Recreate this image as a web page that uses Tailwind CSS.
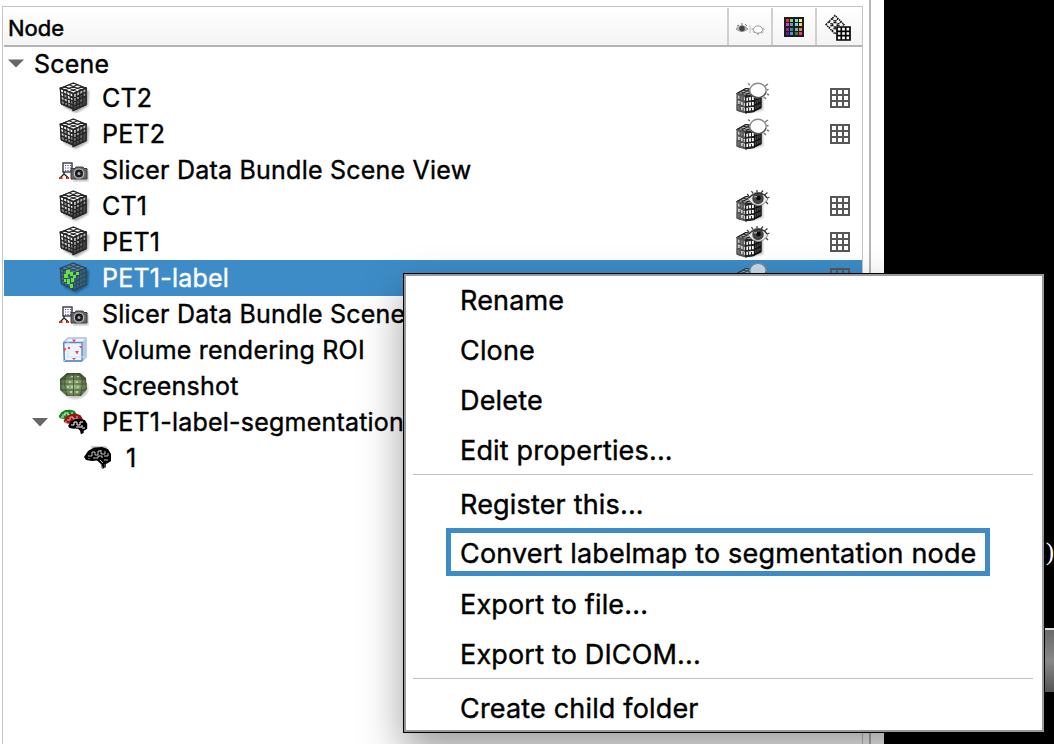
<!DOCTYPE html>
<html lang="en">
<head>
<meta charset="utf-8">
<title>Data tree</title>
<script src="https://cdn.jsdelivr.net/npm/@tailwindcss/browser@4"></script>
</head>
<body class="bg-white">
<svg width="0" height="0" class="absolute">
  <defs>
    <linearGradient id="faceL" x1="0" y1="0" x2="0" y2="1"><stop offset="0" stop-color="#fff"/><stop offset=".55" stop-color="#ddd"/><stop offset="1" stop-color="#555"/></linearGradient>
    <linearGradient id="faceR" x1="0" y1="0" x2="0" y2="1"><stop offset="0" stop-color="#c8c8c8"/><stop offset="1" stop-color="#3c3c3c"/></linearGradient>
    <filter id="soft" x="-30%" y="-30%" width="160%" height="160%"><feGaussianBlur stdDeviation="1.3"/></filter>
    <radialGradient id="ball" cx=".5" cy=".55" r=".6"><stop offset="0" stop-color="#9db983"/><stop offset=".6" stop-color="#748d5e"/><stop offset="1" stop-color="#303d26"/></radialGradient>
    <path id="mesh" d="M0 0H4V4H0ZM1 0V4M2 0V4M3 0V4M0 1H4M0 2H4M0 3H4"/>
    <path id="mesh3" d="M0 0H3V3H0ZM1 0V3M2 0V3M0 1H3M0 2H3"/>
  </defs>
  <symbol id="cube" viewBox="0 0 32 32">
    <path d="M4 8 17 3 30 9 29 24 17 31 5 25Z" fill="#000" opacity=".35" filter="url(#soft)"/>
    <g stroke="#262626" stroke-width=".3" stroke-linejoin="round">
      <g transform="matrix(4.3 1.75 -4.3 1.75 14.3 .9)"><rect width="3" height="3" fill="#f4f4f4"/><use href="#mesh3" fill="none"/></g>
      <g stroke-width=".36">
      <g transform="matrix(3.2 1.35 .25 3.9 1.3 6.2)"><rect width="4" height="4" fill="url(#faceL)"/><use href="#mesh" fill="none"/><path d="M1 1h1v1h-1zM3 2h1v1h-1zM0 3h1v1h-1z" fill="#8a8a8a"/></g>
      <g transform="matrix(3.2 -1.45 -.05 4.15 14.3 11.8)"><rect width="4" height="4" fill="url(#faceR)"/><use href="#mesh" fill="none"/><path d="M1 2h1v1h-1zM2 1h1v1h-1zM3 2h1v2h-1z" fill="#484848"/></g>
      </g>
    </g>
  </symbol>
  <symbol id="cubeLabel" viewBox="0 0 32 32">
    <path d="M4 8 17 3 30 9 29 24 17 31 5 25Z" fill="#1c4c70" opacity=".8" filter="url(#soft)"/>
    <g stroke="#28495e" stroke-width=".28" stroke-linejoin="round">
      <g transform="matrix(4.3 1.75 -4.3 1.75 14.3 .9)"><rect width="3" height="3" fill="#5c8097"/><use href="#mesh3" fill="none"/></g>
      <g transform="matrix(3.2 1.35 .25 3.9 1.3 6.2)"><rect width="4" height="4" fill="#466c83"/><use href="#mesh" fill="none"/></g>
      <g transform="matrix(3.2 -1.45 -.05 4.15 14.3 11.8)"><rect width="4" height="4" fill="#3d637a"/><use href="#mesh" fill="none"/></g>
    </g>
    <path d="M7 8h4v4H7zM11 10h3v4h-3zM5 12h4v4H5zM14 13h3v3h-3zM17 10h3v3h-3zM8 17h3v5H8zM12 16h3v4h-3zM5 17h2v3H5zM11 22h3v4h-3z" fill="#62e444"/>
  </symbol>
  <symbol id="box" viewBox="0 0 34 32">
    <path d="M3 12 20 9 27 14V28L12 31 1 29Z" fill="#777" opacity=".5" filter="url(#soft)"/>
    <g stroke="#222" stroke-width=".36" stroke-linejoin="round">
      <g transform="matrix(4.1 .9 3 -1.7 1 11.500)"><rect width="3" height="3" fill="#b4b4b4"/><use href="#mesh3" fill="none"/></g>
      <g stroke="#555" transform="matrix(3 .9 0 5.3 1.2 12)"><rect width="3" height="3" fill="#cfcfcf"/><use href="#mesh3" fill="none"/><path d="M0 2h1v1h-1zM1 0h1v1h-1z" fill="#777"/></g>
      <g transform="matrix(2.9 -.4 0 5.2 9.7 14.7)"><rect width="3" height="3" fill="#fff"/><use href="#mesh3" fill="none"/></g>
      <g transform="matrix(2.2 -1.1 0 5 18.500 13.6)"><rect width="3" height="3" fill="#4a4a4a"/><use href="#mesh3" fill="none" stroke="#111"/></g>
    </g>
  </symbol>
  <symbol id="hidden" viewBox="0 0 34 32">
    <use href="#box" width="34" height="32"/>
    <path d="M29 4 32 2M31 8 32.5 7.5M31 12 33 13M28 15 30 17M14 3 12 1.5" stroke="#777" stroke-width="1.5"/>
    <ellipse cx="22" cy="8.5" rx="8.2" ry="7.2" fill="#fff" stroke="#8a8a8a" stroke-width="1.4"/>
    <path d="M14.5 12Q18 16 24 15.6Q29 14 30 10" stroke="#555" stroke-width="1.2" fill="none"/>
  </symbol>
  <symbol id="visible" viewBox="0 0 34 32">
    <use href="#box" width="34" height="32"/>
    <path d="M12 9Q17 1 24 2.5Q30 4 32 9Q28 15.5 22 15.5Q16 15 12 9Z" fill="#e8e8e8" stroke="#888" stroke-width="1"/>
    <path d="M13 6 11 4M17 3.5 15.5 1M21 2.5V0M25 3 27 .5M28.5 5 31.5 2.5M31 8 33.5 7M30 12 32 14" stroke="#444" stroke-width="1.3"/>
    <circle cx="22" cy="8.5" r="5.7" fill="#444"/><circle cx="22.5" cy="8" r="2.3" fill="#080808"/><path d="M18 6h3v1.5h-3z" fill="#999"/>
    <path d="M13 8Q18 3 23 3.2Q29 4 31 8" fill="none" stroke="#333" stroke-width="1.3"/>
  </symbol>
  <symbol id="grid" viewBox="0 0 20 20"><path d="M1 1H19V19H1ZM7 1V19M13 1V19M1 7H19M1 13H19" fill="none" stroke="#575757" stroke-width="2"/></symbol>
  <symbol id="camera" viewBox="0 0 30 20">
    <path d="M14 9H30V20H14Z" fill="#888" opacity=".4" filter="url(#soft)"/>
    <path d="M4 1H13V10H4Z" fill="#fff" stroke="#444" stroke-width="1.5"/>
    <path d="M6 3.5H12M6 6H12M6 8.5H12" stroke="#5555e0" stroke-width="1" stroke-dasharray="1.2 1.2"/>
    <path d="M5 10V12L1.500 15.500M5 12 9 15.500" stroke="#222" stroke-width="1.3" fill="none"/>
    <path d="M0 16H3.500M7 16H10" stroke="#e32212" stroke-width="2"/>
    <path d="M12 6.500H16L17 5H24L25 6.500H28V17H12Z" fill="#646464" stroke="#3c3c3c"/>
    <circle cx="20" cy="11.500" r="4.700" fill="#1a1a1a" stroke="#bbb" stroke-width="1.300"/><circle cx="20" cy="11.500" r="1.500" fill="#aaa"/>
  </symbol>
  <symbol id="roi" viewBox="0 0 26 26">
    <path d="M2 5 6 1H24V20L20 24H2Z" fill="#eef3fb" stroke="#a9c0e2" stroke-width="1.500"/>
    <path d="M20 5 24 1V20L20 24Z" fill="#b4c9e8"/>
    <path d="M1.500 5.500H20V24M1.500 5.500 2.500 24H20" fill="none" stroke="#5686c2" stroke-width="1.300"/>
    <path d="M6 2V20H23M6 20 2 24" fill="none" stroke="#d3dff0"/>
    <path d="M10 2.500h4L12 5.500zM13 14h4l-2 3.500zM1 11h3l-1 4zM17 9h3l-1 2.500zM6 10h2v2h-2zM10 21h4l-2 2z" fill="#e8493f"/>
  </symbol>
  <symbol id="ball3d" viewBox="0 0 30 28">
    <ellipse cx="16" cy="17" rx="13" ry="10" fill="#555" opacity=".35" filter="url(#soft)"/>
    <path d="M8 1H21L27 6 28 17 22 24H8L1 18V7Z" fill="url(#ball)"/>
    <path d="M7 2Q4 12 8 24M14.500 1V24M22 2Q25 12 21 24M2 7H27M1 12H28M2 18H27" stroke="#34442a" stroke-width="1" fill="none" opacity=".7"/>
    <path d="M10 9h2v2h-2zM17 9h2v2h-2zM8 14h2v2h-2zM12 14h2v2h-2zM18 14h2v2h-2zM11 19h2v2h-2zM17 19h2v2h-2zM12 4h2v1h-2zM18 4h2v1h-2z" fill="#b8cda5"/>
  </symbol>
  <symbol id="brain" viewBox="0 0 28 24">
    <path d="M0 11 4 5 10 1.500 18 1 24 3 27 8V15L24 17 22 18V21L18 23 17 18 13 14.500 8 15 2 14Z"/>
  </symbol>
  <symbol id="brainOne" viewBox="0 0 28 24">
    <path d="M7 1.500 12 0H18L23 2" stroke="#ccc" stroke-width="2" fill="none"/>
    <use href="#brain" width="28" height="24"/>
    <path d="M4 10H8V6H11V9H14V5H17M17 4V8H21V5M9 12H14V10H18V12M20 10H24V7M20 14H24M16 14 19 17M5 12V13" stroke="#d8d8d8" stroke-width=".9" fill="none"/>
    <path d="M17 18 19 23M21 18V22" stroke="#777" stroke-width="1"/>
  </symbol>
  <symbol id="brains" viewBox="0 0 30 26">
    <use href="#brain" width="20" height="16" fill="#138319"/>
    <path d="M4 6H7V4H10V6H14V3M3 8H6" stroke="#e2f0e2" stroke-width="1.100" fill="none"/>
    <use href="#brain" x="5" y="4" width="21" height="17" fill="#9c1418"/>
    <path d="M9 11H12V8H15V10H19V7M7 13H9" stroke="#e6b3b3" stroke-width="1" fill="none"/>
    <use href="#brain" x="10" y="9" width="20" height="17"/>
    <path d="M13 16H16V13H19V16H22V13H25M18 18H24V16M24 19H27" stroke="#fff" stroke-width="1" fill="none"/>
  </symbol>
</svg>

<div class="relative flex h-[744px] w-[1054px] overflow-hidden bg-white font-['Inter',sans-serif] text-black">
  <main class="flex w-[884px] shrink-0 pt-[6px] pl-[2px]">
    <section class="w-[861px] shrink-0 border border-b-0 border-[#c4c4c4]">
      <header class="ml-px flex h-[40px] border-b-2 border-[#b3b3b3] bg-linear-to-b from-white to-[#f4f4f4]">
        <div class="w-[723px] pl-1 text-[22px] leading-[42px] [-webkit-text-stroke:0.5px_black]">Node</div>
        <div class="mt-px flex w-[44px] items-center justify-center border-l-2 border-[#d0d0d0] pt-[5px]">
          <svg width="30" height="14" viewBox="0 0 30 14"><path d="M1 7Q7 0 13 7Q7 12 1 7" fill="#bbb" stroke="#999"/><circle cx="7" cy="6.500" r="2.800" fill="#444"/><path d="M2 4 4 3M7 1V3M10 2 12 4" stroke="#777"/><path d="M15 3V11" stroke="#bbb"/><ellipse cx="23" cy="7.500" rx="4.600" ry="3.600" fill="#fff" stroke="#999"/><path d="M18 9.500 19.500 11M23 11V13M28 9.500 26.500 11.500M18 7H16.500M28 7H29.500" stroke="#888"/></svg>
        </div>
        <div class="mt-px flex w-[44px] items-center justify-center border-l-2 border-[#d0d0d0] pt-px">
          <svg width="20" height="20" viewBox="0 0 20 20"><path fill="#1b1b22" d="M0 0h20v20H0z"/><path fill="#f43322" d="M2 2h3v3H2z"/><path fill="#7be060" d="M6 2h3v3H6z"/><path fill="#98d6d6" d="M11 2h3v3h-3z"/><path fill="#f3f0a7" d="M15 2h3v3h-3z"/><path fill="#c34bcf" d="M2 6h3v3H2z"/><path fill="#8390bf" d="M6 6h3v3H6z"/><path fill="#78d8dc" d="M11 6h3v3h-3z"/><path fill="#e9d85e" d="M15 6h3v3h-3z"/><path fill="#94278f" d="M2 11h3v3H2z"/><path fill="#438893" d="M6 11h3v3H6z"/><path fill="#62bd9e" d="M11 11h3v3h-3z"/><path fill="#ec8066" d="M15 11h3v3h-3z"/><path fill="#552693" d="M2 15h3v3H2z"/><path fill="#6287ce" d="M6 15h3v3H6z"/><path fill="#39852b" d="M11 15h3v3h-3z"/><path fill="#e8416a" d="M15 15h3v3h-3z"/></svg>
        </div>
        <div class="mt-px flex w-[47px] items-center justify-center border-l-2 border-[#d0d0d0] pt-px pr-[3px]">
          <svg width="26" height="27" viewBox="0 0 26 27"><g fill="none" stroke="#111" stroke-width="1.500" stroke-dasharray="1.500 .8"><path d="M1 10.500 10 1.500 19 10.500 10 20ZM4 7.500 13 17M7 4.500 16 14M4 14 13 4.500M7 17 16 7.500"/></g><path d="M11 12H26V27H11Z" fill="#fff"/><path d="M12 13H25V26H12ZM16.300 13V26M20.700 13V26M12 17.300H25M12 21.700H25" fill="none" stroke="#000" stroke-width="1.700"/></svg>
        </div>
      </header>
      <div class="ml-px text-[25px] leading-[36px] tracking-[0.22px] [-webkit-text-stroke:0.4px_currentColor]">
        <div class="flex h-[33px] items-center"><svg class="mr-[10px] ml-1 shrink-0" width="16" height="9" viewBox="0 0 16 9"><path d="M0 .5H16L8 8.500Z" fill="#666"/></svg><span>Scene</span></div>
        <div class="flex h-9 items-center pl-[55px]"><svg class="mr-[11px] -mt-px" width="32" height="32"><use href="#cube"/></svg><span class="grow">CT2</span><svg class="mr-[60px]" width="34" height="32"><use href="#hidden"/></svg><svg class="mr-[12px]" width="20" height="20"><use href="#grid"/></svg></div>
        <div class="flex h-9 items-center pl-[55px]"><svg class="mr-[11px] -mt-px" width="32" height="32"><use href="#cube"/></svg><span class="grow">PET2</span><svg class="mr-[60px]" width="34" height="32"><use href="#hidden"/></svg><svg class="mr-[12px]" width="20" height="20"><use href="#grid"/></svg></div>
        <div class="flex h-9 items-center pl-[55px]"><svg class="mr-[13px] mt-[3px]" width="30" height="20"><use href="#camera"/></svg><span>Slicer Data Bundle Scene View</span></div>
        <div class="flex h-9 items-center pl-[55px]"><svg class="mr-[11px] -mt-px" width="32" height="32"><use href="#cube"/></svg><span class="grow">CT1</span><svg class="mr-[60px]" width="34" height="32"><use href="#visible"/></svg><svg class="mr-[12px]" width="20" height="20"><use href="#grid"/></svg></div>
        <div class="flex h-9 items-center pl-[55px]"><svg class="mr-[11px] -mt-px" width="32" height="32"><use href="#cube"/></svg><span class="grow">PET1</span><svg class="mr-[60px]" width="34" height="32"><use href="#visible"/></svg><svg class="mr-[12px]" width="20" height="20"><use href="#grid"/></svg></div>
        <div class="flex h-9 items-center bg-[#3d8cc7] pl-[55px] text-white"><svg class="mr-[11px] -mt-px" width="32" height="32"><use href="#cubeLabel"/></svg><span class="grow">PET1-label</span><svg class="mr-[60px] opacity-70" width="34" height="32"><use href="#hidden"/></svg><svg class="mr-[12px]" width="20" height="20"><use href="#grid"/></svg></div>
        <div class="flex h-9 items-center pl-[55px] whitespace-nowrap"><svg class="mr-[13px] mt-[3px]" width="30" height="20"><use href="#camera"/></svg><span>Slicer Data Bundle Scene View</span></div>
        <div class="flex h-9 items-center pl-[58px]"><svg class="mr-[14px]" width="26" height="26"><use href="#roi"/></svg><span>Volume rendering ROI</span></div>
        <div class="flex h-9 items-center pl-[55px]"><svg class="mr-[13px]" width="30" height="28"><use href="#ball3d"/></svg><span>Screenshot</span></div>
        <div class="flex h-9 items-center pl-[28px]"><svg class="mr-[10px]" width="16" height="9" viewBox="0 0 16 9"><path d="M0 0H16L8 8.500Z" fill="#666"/></svg><svg class="mr-[14px]" width="30" height="26"><use href="#brains"/></svg><span>PET1-label-segmentation</span></div>
        <div class="flex h-9 items-center pl-[80px]"><svg class="mr-[14px]" width="28" height="24"><use href="#brainOne"/></svg><span>1</span></div>
      </div>
    </section>
    <div class="-mt-[6px] ml-[6px] w-[2px] bg-[#b5b5b5]"></div>
  </main>
  <aside class="relative grow bg-black">
    <div class="absolute top-[538px] right-0 font-['Liberation_Serif',serif] text-[25px] leading-7 text-white">s)</div>
    <div class="absolute top-[628px] right-0 h-16 w-[9px] border-t-2 border-[#ddd] bg-linear-to-b from-[#6a6a6a] via-[#888] to-[#555]"></div>
  </aside>

  <div class="pointer-events-none absolute inset-y-0 left-0 w-[884px] overflow-hidden"><div class="absolute top-[273px] left-[403px] h-[460px] w-[641px] shadow-[0_20px_40px_rgba(0,0,0,0.38)]"></div></div>
  <nav class="absolute top-[274px] left-[404px] h-[458px] w-[640px] border-2 border-[#999] bg-white text-[27px] leading-[50px] tracking-[0.17px] outline-1 outline-black [-webkit-text-stroke:0.4px_black]">
    <ul class="pl-[54px]">
      <li>Rename</li><li>Clone</li><li>Delete</li><li>Edit properties...</li>
    </ul>
    <hr class="mr-[9px] ml-[7px] -mt-[2px] mb-[5px] border-[#bfbfbf]">
    <ul class="pl-[54px]">
      <li>Register this...</li>
      <li class="-ml-[14px] flex h-[50px] w-[544px] items-start"><span class="-mt-[2px] flex h-[48px] w-full items-center border-[5px] border-[#3d8cc7] pt-[3px] pl-[9px] whitespace-nowrap">Convert labelmap to segmentation node</span></li>
      <li>Export to file...</li><li>Export to DICOM...</li>
    </ul>
    <hr class="mr-[9px] ml-[7px] -mt-[2px] mb-[5px] border-[#bfbfbf]">
    <ul class="pl-[54px]"><li>Create child folder</li></ul>
  </nav>
</div>
</body>
</html>
